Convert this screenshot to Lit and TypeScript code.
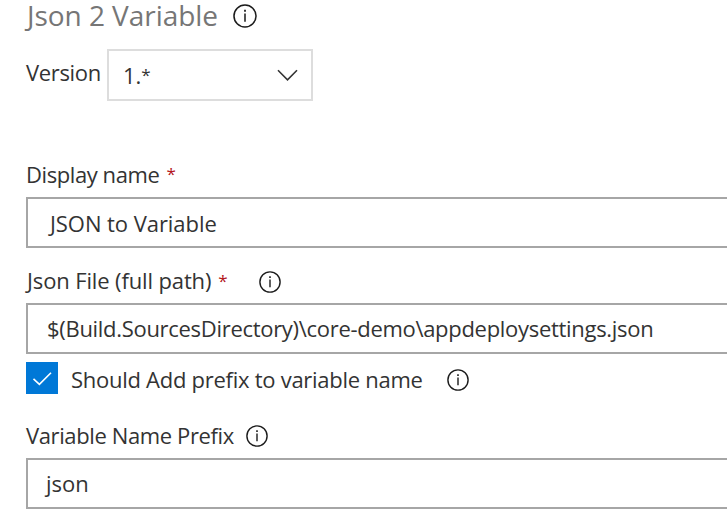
import { LitElement, html, css } from "lit";
import { customElement, property } from "lit/decorators.js";

@customElement("info-icon")
class InfoIcon extends LitElement {
  @property({ type: Number }) size = 22;
  static styles = css`
    :host { display: block; flex: none; }
    svg { display: block; }
  `;
  render() {
    return html`<svg width=${this.size} height=${this.size} viewBox="0 0 22 22" fill="none" stroke="#1b1b1b">
      <circle cx="11" cy="11" r="10.1" stroke-width="1.4" />
      <path d="M11 8.6v7.6" stroke-width="1.4" />
      <path d="M11 5.3v1.8" stroke-width="1.6" />
    </svg>`;
  }
}

@customElement("app-root")
class AppRoot extends LitElement {
  static styles = css`
    :host {
      display: block; height: 524px; overflow: hidden; background: #fff; color: #333;
      font: 22px/30px "Open Sans", "Noto Sans", sans-serif;
    }
    .form { display: flex; flex-direction: column; padding-left: 26px; }
    .row { display: flex; align-items: center; height: 30px; white-space: pre; }
    .title { height: 31px; font-size: 28px; color: #767676; }
    .title span { margin: -2px 0 0 1px; letter-spacing: -0.05px; }
    .title info-icon { margin-left: 15.5px; }
    .version { height: 52px; margin-top: 18px; }
    .version-label { width: 81px; letter-spacing: -0.35px; margin-top: -6px; }
    .select {
      box-sizing: border-box; width: 206px; height: 52px; border: 2px solid #ddd;
      padding: 0 13px 0 14px; display: flex; align-items: center; justify-content: space-between;
    }
    .number { margin-top: -1px; }
    .star { font-size: 17px; line-height: 20px; vertical-align: 3px; }
    .chevron { display: block; }
    .display { margin-top: 58px; letter-spacing: -0.42px; }
    .req { color: #b3141b; font-size: 17px; line-height: 20px; margin: -1px 0 0 7px; letter-spacing: 0; }
    .input {
      box-sizing: border-box; height: 51px; border: 2px solid #a6a6a6; border-right: 0;
      display: flex; align-items: center; white-space: pre;
    }
    .name { margin-top: 8px; padding: 0 0 0 22px; letter-spacing: -0.06px; }
    .file { margin-top: 18px; letter-spacing: -0.13px; }
    .file-label { margin: -2px 0 0 1px; }
    .file info-icon { margin: 1px 0 0 31.5px; }
    .path { margin-top: 7px; padding: 0 0 2px 19px; letter-spacing: -0.3px; }
    .check { margin-top: 8px; height: 32px; letter-spacing: -0.27px; }
    .check span { margin-top: 2px; }
    .box { width: 32px; height: 32px; background: #0078d7; margin-right: 13px; flex: none; }
    .check info-icon { margin: 4px 0 0 24px; }
    .prefix { margin-top: 26px; letter-spacing: -0.38px; }
    .prefix info-icon { margin: 2px 0 0 12.5px; }
    .value { margin-top: 8px; padding: 0 0 2px 18px; }
  `;
  render() {
    return html`<div class="form">
      <div class="row title"><span>Json 2 Variable</span><info-icon .size=${24}></info-icon></div>
      <div class="row version">
        <span class="version-label">Version</span>
        <div class="select">
          <span class="number">1.<span class="star">*</span></span>
          <svg class="chevron" width="21" height="13" viewBox="0 0 21 13" fill="none" stroke="#333" stroke-width="1.6"><path d="M1 1.3l9.5 9.5L20 1.3" /></svg>
        </div>
      </div>
      <div class="row display"><span>Display name</span><span class="req">*</span></div>
      <div class="input name">JSON to Variable</div>
      <div class="row file"><span class="file-label">Json File (full path)</span><span class="req">*</span><info-icon></info-icon></div>
      <div class="input path">$(Build.SourcesDirectory)\\core-demo\\appdeploysettings.json</div>
      <div class="row check">
        <svg class="box" viewBox="0 0 32 32" fill="none" stroke="#fff" stroke-width="1.6"><path d="M7.5 16.8l5.9 5.6L25 10.7" /></svg>
        <span>Should Add prefix to variable name</span><info-icon></info-icon>
      </div>
      <div class="row prefix"><span>Variable Name Prefix</span><info-icon></info-icon></div>
      <div class="input value">json</div>
    </div>`;
  }
}
